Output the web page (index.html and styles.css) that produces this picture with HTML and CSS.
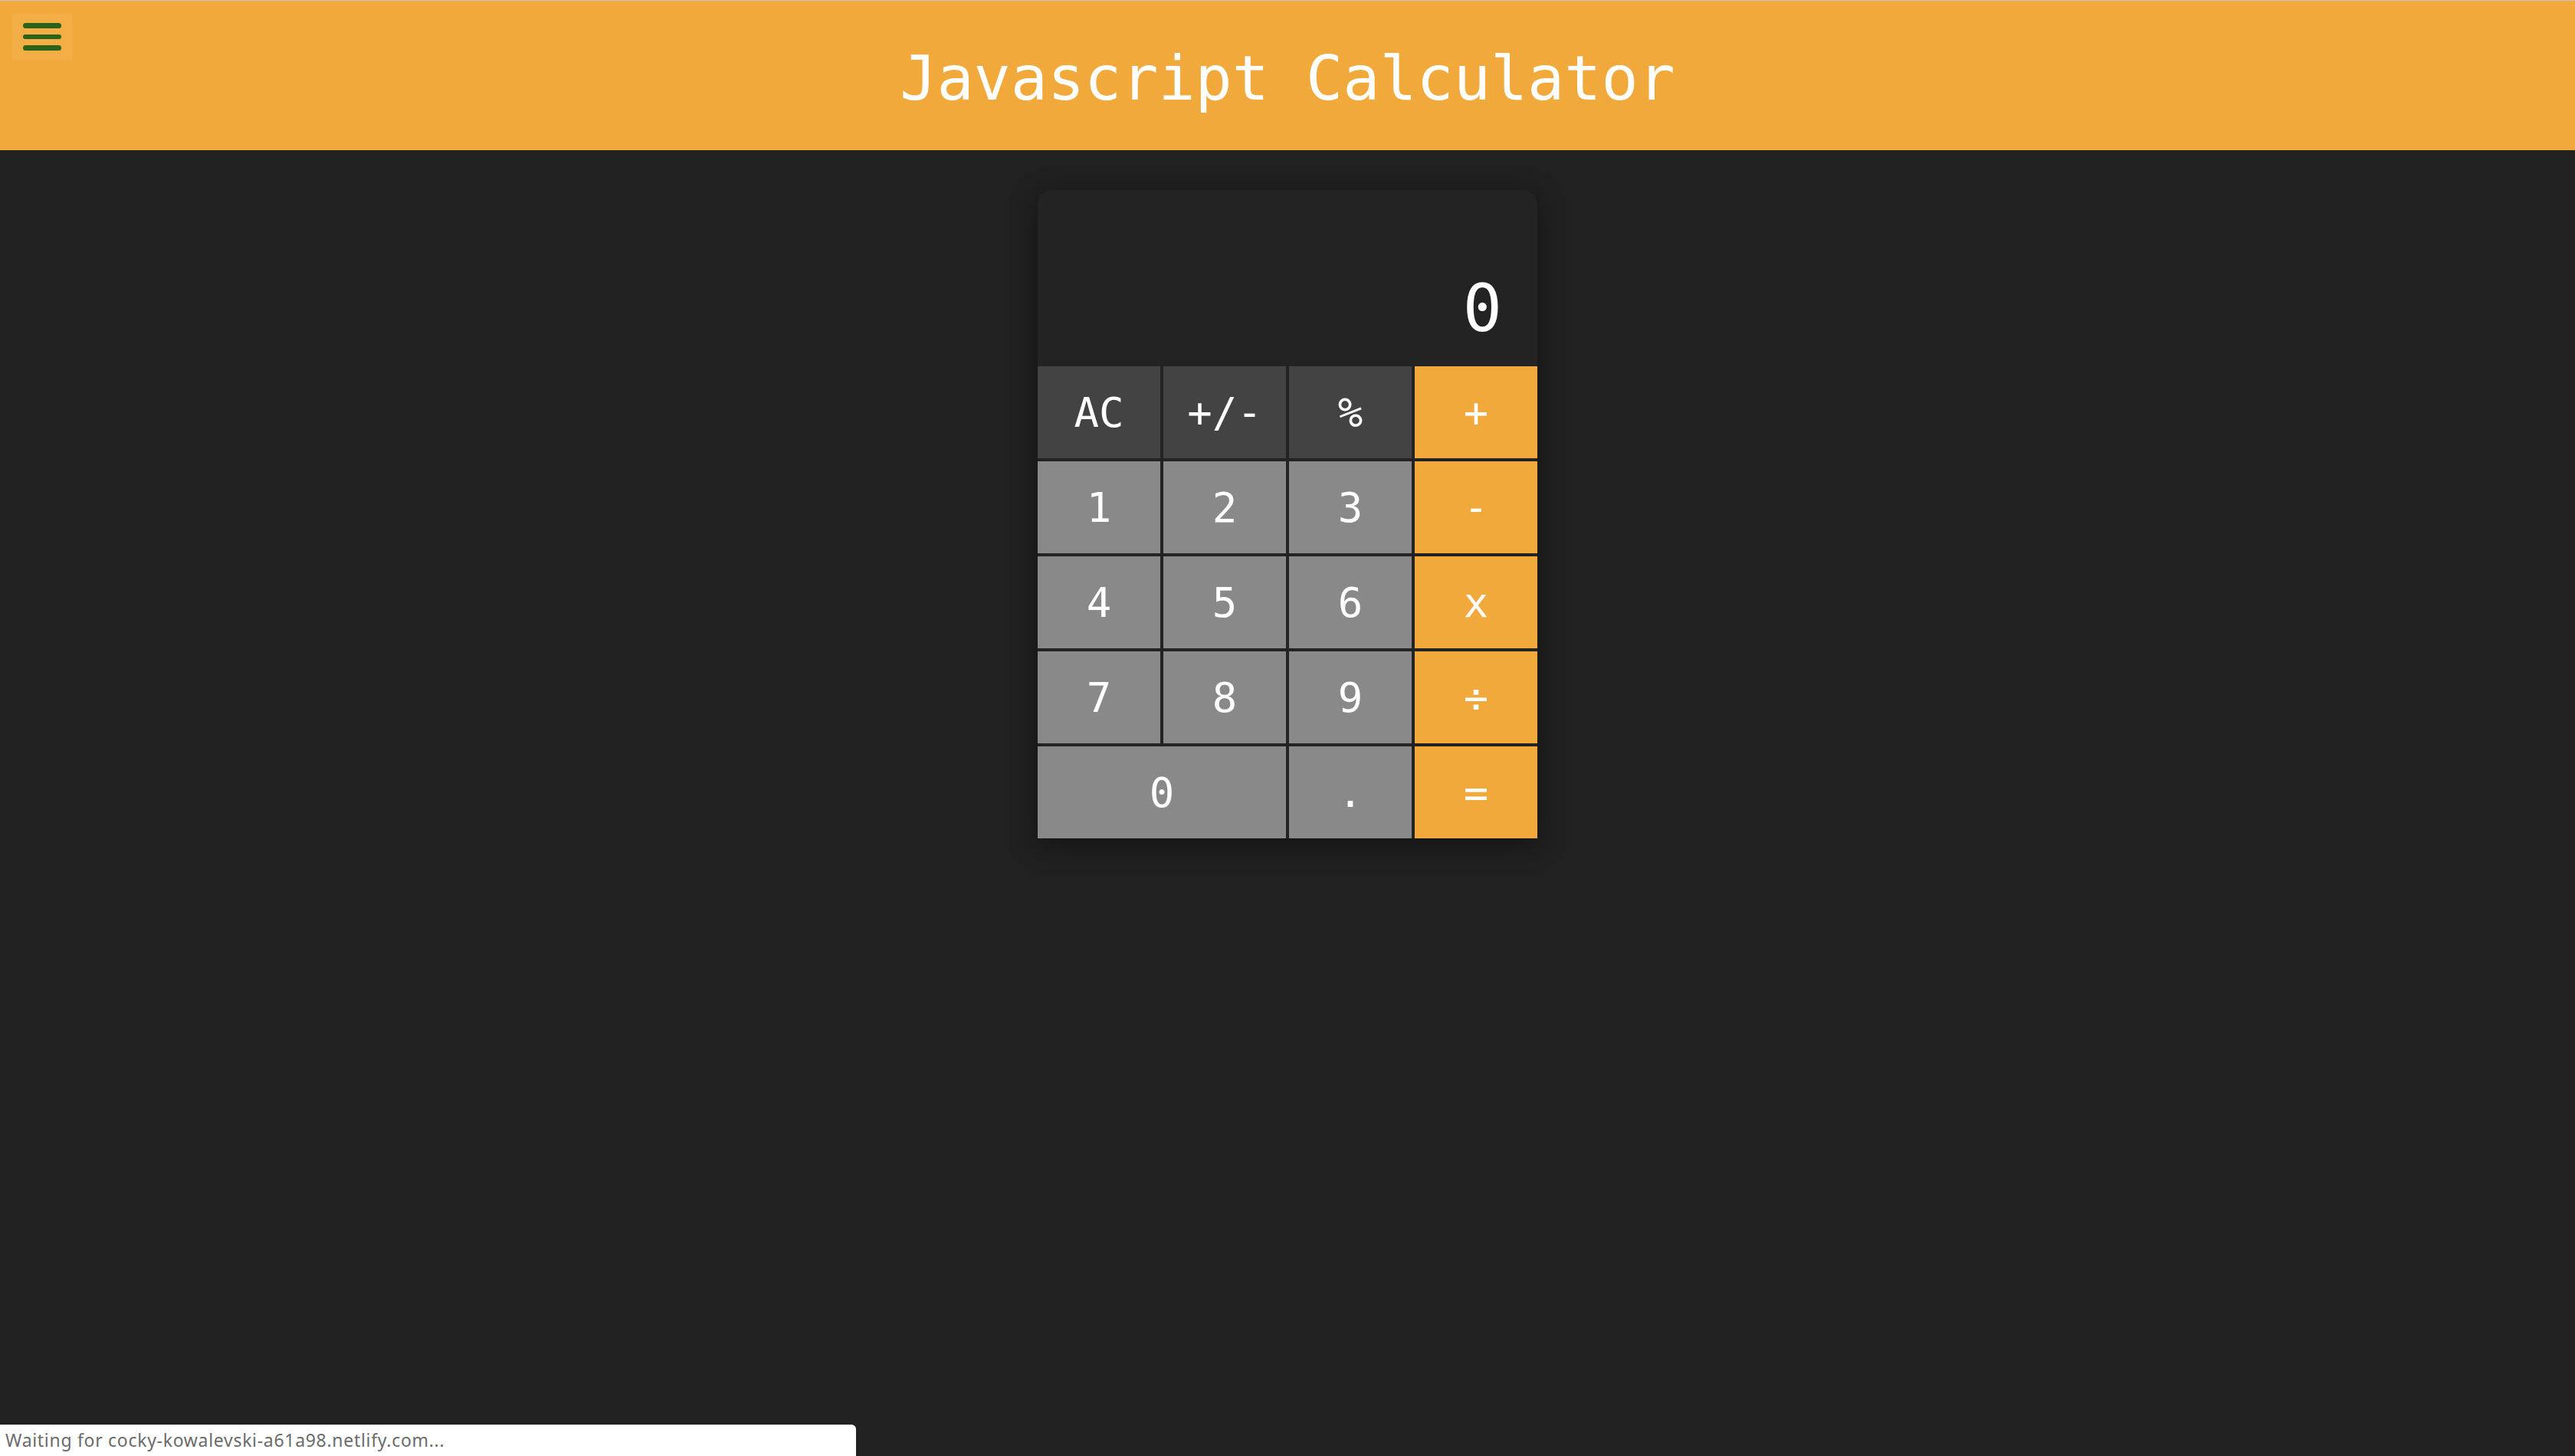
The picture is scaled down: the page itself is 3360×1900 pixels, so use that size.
FILE: index.html
```html
<!DOCTYPE html>
<html lang="en">
<head>
<meta charset="utf-8">
<title>Javascript Calculator</title>
<link rel="stylesheet" href="styles.css">
</head>
<body>
<header class="topbar">
  <button class="menu-btn" aria-label="menu">
    <span class="menu-line"></span>
    <span class="menu-line"></span>
    <span class="menu-line"></span>
  </button>
  <h1 class="title">Javascript Calculator</h1>
</header>
<main class="stage">
  <div class="calc">
    <div class="display"><span class="display-value">0</span></div>
    <div class="keys">
      <button class="key key-fn">AC</button>
      <button class="key key-fn">+/-</button>
      <button class="key key-fn">%</button>
      <button class="key key-op">+</button>
      <button class="key key-num">1</button>
      <button class="key key-num">2</button>
      <button class="key key-num">3</button>
      <button class="key key-op">-</button>
      <button class="key key-num">4</button>
      <button class="key key-num">5</button>
      <button class="key key-num">6</button>
      <button class="key key-op">x</button>
      <button class="key key-num">7</button>
      <button class="key key-num">8</button>
      <button class="key key-num">9</button>
      <button class="key key-op">÷</button>
      <button class="key key-num key-wide">0</button>
      <button class="key key-num">.</button>
      <button class="key key-op">=</button>
    </div>
  </div>
</main>
<div class="status">Waiting for cocky-kowalevski-a61a98.netlify.com...</div>
</body>
</html>
```

FILE: styles.css
```css
html, body {
  margin: 0;
  padding: 0;
}
body {
  background: #212121;
  min-height: 1900px;
  font-family: "DejaVu Sans Mono", "Liberation Mono", monospace;
  overflow: hidden;
}
.topbar {
  position: relative;
  box-sizing: border-box;
  height: 196px;
  border-top: 1px solid #c4c4c4;
  background: #f2a93b;
  display: flex;
  align-items: center;
  justify-content: center;
  padding-top: 8px;
}
.title {
  margin: 0;
  font-family: "DejaVu Sans Mono", monospace;
  font-weight: normal;
  font-size: 80px;
  line-height: 93px;
  color: #ffffff;
}
.menu-btn {
  position: absolute;
  left: 16px;
  top: 17px;
  width: 78px;
  height: 60px;
  border: 0;
  margin: 0;
  padding: 12px 14px;
  box-sizing: border-box;
  background: #f3ae45;
  display: flex;
  flex-direction: column;
  gap: 8px;
}
.menu-line {
  display: block;
  width: 50px;
  height: 8px;
  border-radius: 4px;
  background: #2b6418;
}
.stage {
  display: flex;
  justify-content: center;
  padding-top: 52px;
}
.calc {
  width: 652px;
  background: #232323;
  border-radius: 18px 18px 0 0;
  box-shadow: 0 8px 36px rgba(0, 0, 0, 0.45);
}
.display {
  height: 230px;
  box-sizing: border-box;
  display: flex;
  align-items: flex-end;
  justify-content: flex-end;
  padding: 0 46px 26px 0;
}
.display-value {
  font-size: 85px;
  line-height: normal;
  color: #ffffff;
}
.keys {
  display: grid;
  grid-template-columns: repeat(4, 160px);
  grid-auto-rows: 120px;
  column-gap: 4px;
  row-gap: 4px;
  background: #232323;
}
.key {
  border: 0;
  margin: 0;
  padding: 0;
  font-family: "DejaVu Sans Mono", monospace;
  font-size: 54px;
  color: #ffffff;
  display: flex;
  align-items: center;
  justify-content: center;
}
.key-fn { background: #434343; }
.key-num { background: #898989; }
.key-op { background: #f2a93b; }
.key-wide { grid-column: span 2; }
.status {
  position: fixed;
  left: 0;
  bottom: 0;
  width: 1117px;
  height: 41px;
  box-sizing: border-box;
  background: #ffffff;
  border-top-right-radius: 6px;
  padding: 5px 0 0 7px;
  font-family: "Noto Sans", "Liberation Sans", sans-serif;
  font-size: 23px;
  line-height: 30px;
  letter-spacing: 0.7px;
  color: #6b6b6b;
}
```
